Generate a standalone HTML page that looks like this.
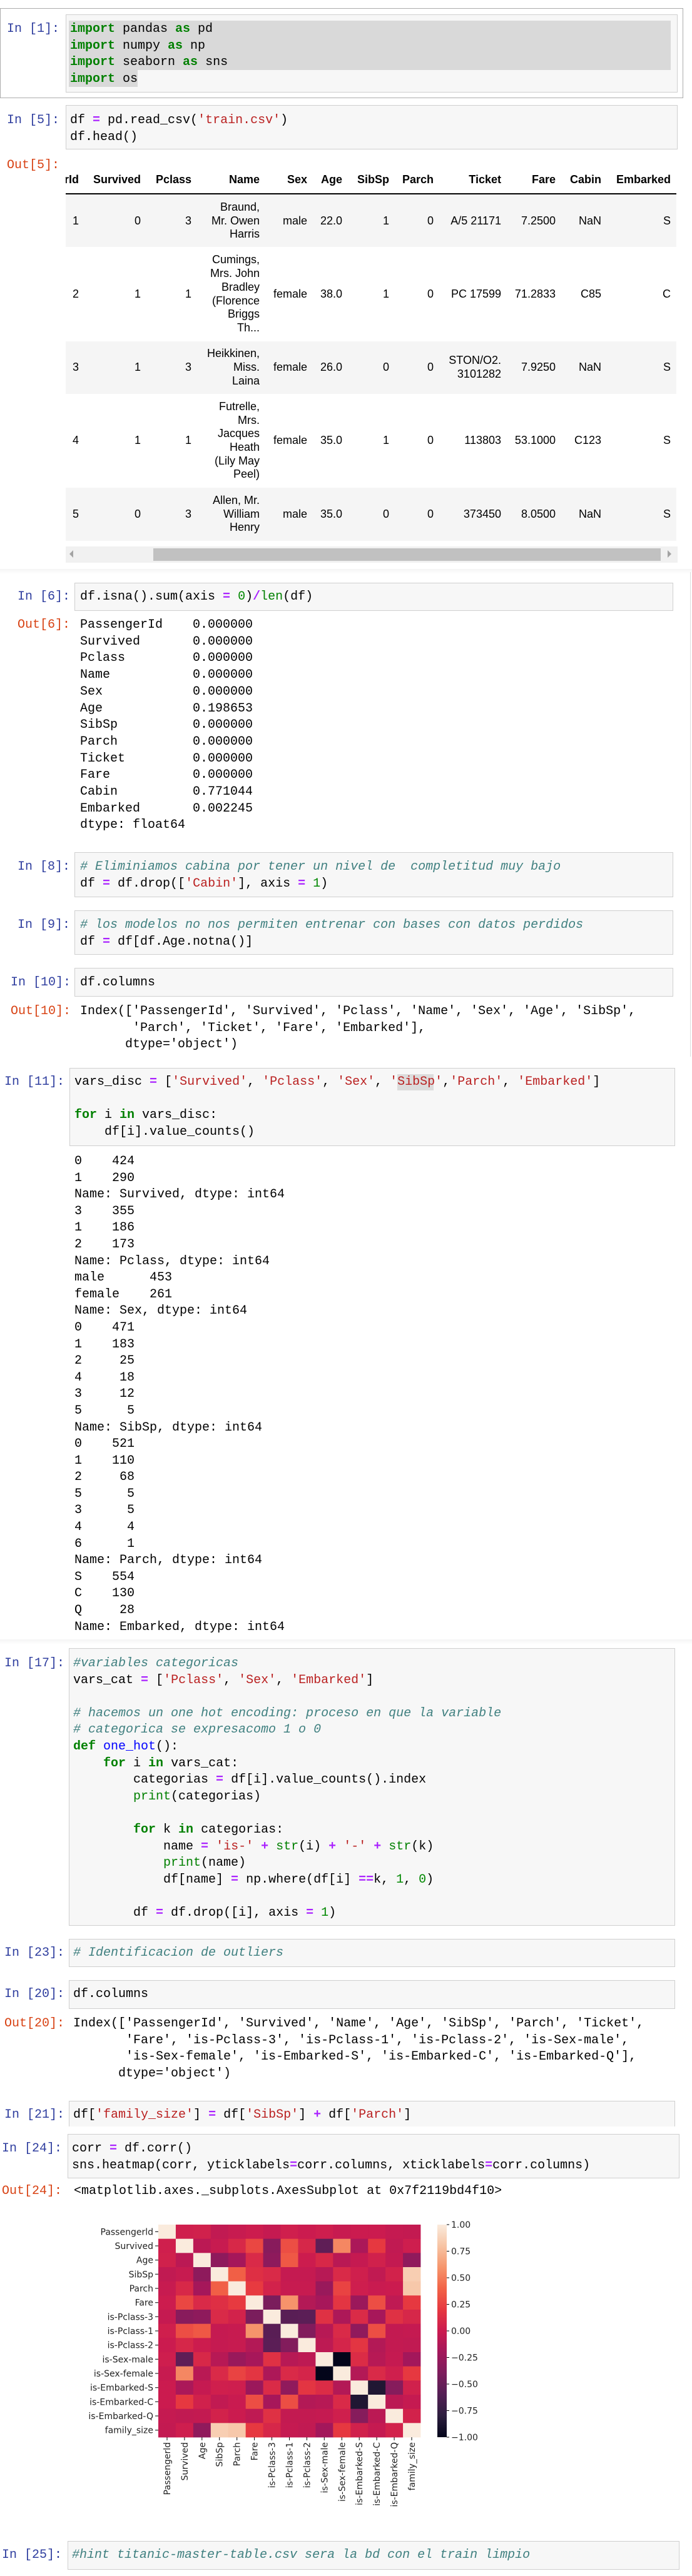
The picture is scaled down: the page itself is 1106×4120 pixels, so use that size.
<!DOCTYPE html>
<html><head><meta charset="utf-8">
<style>
html,body{margin:0;padding:0;background:#fff}
body{width:1106px;height:4120px;position:relative;overflow:hidden}
.p{position:absolute;font:20px/26.6px "Liberation Mono",monospace;white-space:pre;color:#000}
.in{color:#303f9f}.out{color:#d84315}
.box{position:absolute;background:#f7f7f7;border:1px solid #cfcfcf;box-sizing:border-box}
.k{color:#008000;font-weight:bold}.o{color:#aa22ff;font-weight:bold}.s{color:#ba2121}.c{color:#408080;font-style:italic}.n{color:#080}.f{color:#0000ff}.b{color:#008000}
.td{position:absolute;width:160px;display:flex;align-items:center;justify-content:flex-end;text-align:right;font:18px/21.7px "Liberation Sans",sans-serif;color:#000}
.th{font-weight:bold}
.stripe{position:absolute;left:0;width:976px;background:#f5f5f5}
</style></head><body>

<!-- Cell 1 selected -->
<div style="position:absolute;left:0;top:13px;width:1092px;height:144px;border:1.5px solid #ababab;box-sizing:border-box"></div>
<div class="box" style="left:105px;top:23px;width:978px;height:125px"></div>
<div style="position:absolute;left:110px;top:33px;width:962px;height:79px;background:#d9d9d9"></div>
<div style="position:absolute;left:110px;top:112px;width:110px;height:27px;background:#d9d9d9"></div>
<div class="p in" style="left:11px;top:34px">In [1]:</div>
<div class="p" style="left:112px;top:34px"><span class="k">import</span> pandas <span class="k">as</span> pd
<span class="k">import</span> numpy <span class="k">as</span> np
<span class="k">import</span> seaborn <span class="k">as</span> sns
<span class="k">import</span> os</div>

<!-- In 5 -->
<div class="box" style="left:105px;top:168px;width:978px;height:71px"></div>
<div class="p in" style="left:11px;top:180px">In [5]:</div>
<div class="p" style="left:112px;top:180px">df <span class="o">=</span> pd.read_csv(<span class="s">'train.csv'</span>)
df.head()</div>
<div class="p out" style="left:11px;top:252px">Out[5]:</div>

<!-- table -->
<div style="position:absolute;left:105px;top:270px;width:976px;height:600px;overflow:hidden">
<div class="stripe" style="top:42px;height:83px"></div>
<div class="stripe" style="top:276px;height:84px"></div>
<div class="stripe" style="top:510px;height:85px"></div>
<div style="position:absolute;left:0;top:39px;width:976px;height:2px;background:#000"></div>
<!-- header -->
<div class="td th" style="left:-139px;top:6px;height:24px">PassengerId</div>
<div class="td th" style="left:-40px;top:6px;height:24px">Survived</div>
<div class="td th" style="left:41px;top:6px;height:24px">Pclass</div>
<div class="td th" style="left:150px;top:6px;height:24px">Name</div>
<div class="td th" style="left:226px;top:6px;height:24px">Sex</div>
<div class="td th" style="left:282px;top:6px;height:24px">Age</div>
<div class="td th" style="left:357px;top:6px;height:24px">SibSp</div>
<div class="td th" style="left:428px;top:6px;height:24px">Parch</div>
<div class="td th" style="left:536px;top:6px;height:24px">Ticket</div>
<div class="td th" style="left:623px;top:6px;height:24px">Fare</div>
<div class="td th" style="left:696px;top:6px;height:24px">Cabin</div>
<div class="td th" style="left:807px;top:6px;height:24px">Embarked</div>
<!-- r1 -->
<div class="td" style="left:-139px;top:42px;height:83px">1</div>
<div class="td" style="left:-40px;top:42px;height:83px">0</div>
<div class="td" style="left:41px;top:42px;height:83px">3</div>
<div class="td" style="left:150px;top:42px;height:83px">Braund,<br>Mr. Owen<br>Harris</div>
<div class="td" style="left:226px;top:42px;height:83px">male</div>
<div class="td" style="left:282px;top:42px;height:83px">22.0</div>
<div class="td" style="left:357px;top:42px;height:83px">1</div>
<div class="td" style="left:428px;top:42px;height:83px">0</div>
<div class="td" style="left:536px;top:42px;height:83px">A/5 21171</div>
<div class="td" style="left:623px;top:42px;height:83px">7.2500</div>
<div class="td" style="left:696px;top:42px;height:83px">NaN</div>
<div class="td" style="left:807px;top:42px;height:83px">S</div>
<!-- r2 -->
<div class="td" style="left:-139px;top:125px;height:151px">2</div>
<div class="td" style="left:-40px;top:125px;height:151px">1</div>
<div class="td" style="left:41px;top:125px;height:151px">1</div>
<div class="td" style="left:150px;top:125px;height:151px">Cumings,<br>Mrs. John<br>Bradley<br>(Florence<br>Briggs<br>Th...</div>
<div class="td" style="left:226px;top:125px;height:151px">female</div>
<div class="td" style="left:282px;top:125px;height:151px">38.0</div>
<div class="td" style="left:357px;top:125px;height:151px">1</div>
<div class="td" style="left:428px;top:125px;height:151px">0</div>
<div class="td" style="left:536px;top:125px;height:151px">PC 17599</div>
<div class="td" style="left:623px;top:125px;height:151px">71.2833</div>
<div class="td" style="left:696px;top:125px;height:151px">C85</div>
<div class="td" style="left:807px;top:125px;height:151px">C</div>
<!-- r3 -->
<div class="td" style="left:-139px;top:276px;height:84px">3</div>
<div class="td" style="left:-40px;top:276px;height:84px">1</div>
<div class="td" style="left:41px;top:276px;height:84px">3</div>
<div class="td" style="left:150px;top:276px;height:84px">Heikkinen,<br>Miss.<br>Laina</div>
<div class="td" style="left:226px;top:276px;height:84px">female</div>
<div class="td" style="left:282px;top:276px;height:84px">26.0</div>
<div class="td" style="left:357px;top:276px;height:84px">0</div>
<div class="td" style="left:428px;top:276px;height:84px">0</div>
<div class="td" style="left:536px;top:276px;height:84px">STON/O2.<br>3101282</div>
<div class="td" style="left:623px;top:276px;height:84px">7.9250</div>
<div class="td" style="left:696px;top:276px;height:84px">NaN</div>
<div class="td" style="left:807px;top:276px;height:84px">S</div>
<!-- r4 -->
<div class="td" style="left:-139px;top:360px;height:150px">4</div>
<div class="td" style="left:-40px;top:360px;height:150px">1</div>
<div class="td" style="left:41px;top:360px;height:150px">1</div>
<div class="td" style="left:150px;top:360px;height:150px">Futrelle,<br>Mrs.<br>Jacques<br>Heath<br>(Lily May<br>Peel)</div>
<div class="td" style="left:226px;top:360px;height:150px">female</div>
<div class="td" style="left:282px;top:360px;height:150px">35.0</div>
<div class="td" style="left:357px;top:360px;height:150px">1</div>
<div class="td" style="left:428px;top:360px;height:150px">0</div>
<div class="td" style="left:536px;top:360px;height:150px">113803</div>
<div class="td" style="left:623px;top:360px;height:150px">53.1000</div>
<div class="td" style="left:696px;top:360px;height:150px">C123</div>
<div class="td" style="left:807px;top:360px;height:150px">S</div>
<!-- r5 -->
<div class="td" style="left:-139px;top:510px;height:85px">5</div>
<div class="td" style="left:-40px;top:510px;height:85px">0</div>
<div class="td" style="left:41px;top:510px;height:85px">3</div>
<div class="td" style="left:150px;top:510px;height:85px">Allen, Mr.<br>William<br>Henry</div>
<div class="td" style="left:226px;top:510px;height:85px">male</div>
<div class="td" style="left:282px;top:510px;height:85px">35.0</div>
<div class="td" style="left:357px;top:510px;height:85px">0</div>
<div class="td" style="left:428px;top:510px;height:85px">0</div>
<div class="td" style="left:536px;top:510px;height:85px">373450</div>
<div class="td" style="left:623px;top:510px;height:85px">8.0500</div>
<div class="td" style="left:696px;top:510px;height:85px">NaN</div>
<div class="td" style="left:807px;top:510px;height:85px">S</div>
</div>
<!-- scrollbar -->
<div style="position:absolute;left:105px;top:874px;width:978px;height:26px;background:#f1f1f1"></div>
<div style="position:absolute;left:245px;top:877px;width:811px;height:20px;background:#c1c1c1"></div>
<div style="position:absolute;left:111px;top:880px;width:0;height:0;border-top:6px solid transparent;border-bottom:6px solid transparent;border-right:6px solid #a3a3a3"></div>
<div style="position:absolute;left:1067px;top:880px;width:0;height:0;border-top:6px solid transparent;border-bottom:6px solid transparent;border-left:6px solid #a3a3a3"></div>

<div style="position:absolute;left:0;top:910px;width:1106px;height:8px;background:linear-gradient(#f4f4f4,#fff)"></div>
<div style="position:absolute;left:1103px;top:915px;width:1px;height:775px;background:#dcdcdc"></div>

<!-- In 6 -->
<div class="box" style="left:119px;top:932px;width:957px;height:45px"></div>
<div class="p in" style="left:28px;top:942px">In [6]:</div>
<div class="p" style="left:128px;top:942px">df.isna().sum(axis <span class="o">=</span> <span class="n">0</span>)<span class="o">/</span><span class="b">len</span>(df)</div>
<div class="p out" style="left:28px;top:987px">Out[6]:</div>
<div class="p" style="left:128px;top:987px;line-height:26.7px">PassengerId    0.000000
Survived       0.000000
Pclass         0.000000
Name           0.000000
Sex            0.000000
Age            0.198653
SibSp          0.000000
Parch          0.000000
Ticket         0.000000
Fare           0.000000
Cabin          0.771044
Embarked       0.002245
dtype: float64</div>

<!-- In 8 -->
<div class="box" style="left:119px;top:1363px;width:957px;height:72px"></div>
<div class="p in" style="left:28px;top:1374px">In [8]:</div>
<div class="p" style="left:128px;top:1374px"><span class="c"># Eliminiamos cabina por tener un nivel de  completitud muy bajo</span>
df <span class="o">=</span> df.drop([<span class="s">'Cabin'</span>], axis <span class="o">=</span> <span class="n">1</span>)</div>

<!-- In 9 -->
<div class="box" style="left:119px;top:1456px;width:957px;height:71px"></div>
<div class="p in" style="left:28px;top:1467px">In [9]:</div>
<div class="p" style="left:128px;top:1467px"><span class="c"># los modelos no nos permiten entrenar con bases con datos perdidos</span>
df <span class="o">=</span> df[df.Age.notna()]</div>

<!-- In 10 -->
<div class="box" style="left:119px;top:1548px;width:957px;height:46px"></div>
<div class="p in" style="left:17px;top:1559px">In [10]:</div>
<div class="p" style="left:128px;top:1559px">df.columns</div>
<div class="p out" style="left:17px;top:1605px">Out[10]:</div>
<div class="p" style="left:128px;top:1605px">Index(['PassengerId', 'Survived', 'Pclass', 'Name', 'Sex', 'Age', 'SibSp',
       'Parch', 'Ticket', 'Fare', 'Embarked'],
      dtype='object')</div>

<!-- In 11 -->
<div class="box" style="left:111px;top:1708px;width:968px;height:125px"></div>
<div style="position:absolute;left:635px;top:1718px;width:58px;height:26px;background:#dcdcdc"></div>
<div class="p in" style="left:7px;top:1718px">In [11]:</div>
<div class="p" style="left:119px;top:1718px">vars_disc <span class="o">=</span> [<span class="s">'Survived'</span>, <span class="s">'Pclass'</span>, <span class="s">'Sex'</span>, <span class="s">'SibSp'</span>,<span class="s">'Parch'</span>, <span class="s">'Embarked'</span>]

<span class="k">for</span> i <span class="k">in</span> vars_disc:
    df[i].value_counts()</div>
<div class="p" style="left:119px;top:1845px">0    424
1    290
Name: Survived, dtype: int64
3    355
1    186
2    173
Name: Pclass, dtype: int64
male      453
female    261
Name: Sex, dtype: int64
0    471
1    183
2     25
4     18
3     12
5      5
Name: SibSp, dtype: int64
0    521
1    110
2     68
5      5
3      5
4      4
6      1
Name: Parch, dtype: int64
S    554
C    130
Q     28
Name: Embarked, dtype: int64</div>

<div style="position:absolute;left:0;top:2622px;width:1106px;height:8px;background:linear-gradient(#f4f4f4,#fff)"></div>

<!-- In 17 -->
<div class="box" style="left:110px;top:2636px;width:969px;height:444px"></div>
<div class="p in" style="left:7px;top:2648px">In [17]:</div>
<div class="p" style="left:117px;top:2648px"><span class="c">#variables categoricas</span>
vars_cat <span class="o">=</span> [<span class="s">'Pclass'</span>, <span class="s">'Sex'</span>, <span class="s">'Embarked'</span>]

<span class="c"># hacemos un one hot encoding: proceso en que la variable</span>
<span class="c"># categorica se expresacomo 1 o 0</span>
<span class="k">def</span> <span class="f">one_hot</span>():
    <span class="k">for</span> i <span class="k">in</span> vars_cat:
        categorias <span class="o">=</span> df[i].value_counts().index
        <span class="b">print</span>(categorias)

        <span class="k">for</span> k <span class="k">in</span> categorias:
            name <span class="o">=</span> <span class="s">'is-'</span> <span class="o">+</span> <span class="b">str</span>(i) <span class="o">+</span> <span class="s">'-'</span> <span class="o">+</span> <span class="b">str</span>(k)
            <span class="b">print</span>(name)
            df[name] <span class="o">=</span> np.where(df[i] <span class="o">==</span>k, <span class="n">1</span>, <span class="n">0</span>)

        df <span class="o">=</span> df.drop([i], axis <span class="o">=</span> <span class="n">1</span>)</div>

<!-- In 23 -->
<div class="box" style="left:110px;top:3101px;width:969px;height:45px"></div>
<div class="p in" style="left:7px;top:3111px">In [23]:</div>
<div class="p" style="left:117px;top:3111px"><span class="c"># Identificacion de outliers</span></div>

<!-- In 20 -->
<div class="box" style="left:110px;top:3167px;width:969px;height:46px"></div>
<div class="p in" style="left:7px;top:3177px">In [20]:</div>
<div class="p" style="left:117px;top:3177px">df.columns</div>
<div class="p out" style="left:7px;top:3224px">Out[20]:</div>
<div class="p" style="left:117px;top:3224px">Index(['PassengerId', 'Survived', 'Name', 'Age', 'SibSp', 'Parch', 'Ticket',
       'Fare', 'is-Pclass-3', 'is-Pclass-1', 'is-Pclass-2', 'is-Sex-male',
       'is-Sex-female', 'is-Embarked-S', 'is-Embarked-C', 'is-Embarked-Q'],
      dtype='object')</div>

<!-- In 21 -->
<div class="box" style="left:110px;top:3360px;width:969px;height:41px;border-bottom:none"></div>
<div class="p in" style="left:7px;top:3370px">In [21]:</div>
<div class="p" style="left:117px;top:3370px">df[<span class="s">'family_size'</span>] <span class="o">=</span> df[<span class="s">'SibSp'</span>] <span class="o">+</span> df[<span class="s">'Parch'</span>]</div>

<!-- In 24 -->
<div class="box" style="left:108px;top:3413px;width:978px;height:71px"></div>
<div class="p in" style="left:3px;top:3424px">In [24]:</div>
<div class="p" style="left:115px;top:3424px">corr <span class="o">=</span> df.corr()
sns.heatmap(corr, yticklabels<span class="o">=</span>corr.columns, xticklabels<span class="o">=</span>corr.columns)</div>
<div class="p out" style="left:3px;top:3492px">Out[24]:</div>
<div class="p" style="left:118px;top:3492px">&lt;matplotlib.axes._subplots.AxesSubplot at 0x7f2119bd4f10&gt;</div>

<!-- heatmap -->
<svg style="position:absolute;left:0;top:3540px" width="800" height="520" viewBox="0 3540 800 520" font-family="DejaVu Sans, sans-serif" font-size="14">
<defs><linearGradient id="cb" x1="0" y1="0" x2="0" y2="1">
<stop offset="0" stop-color="#faebdd"/><stop offset="0.1" stop-color="#f7c4a4"/><stop offset="0.2" stop-color="#f6966d"/><stop offset="0.3" stop-color="#f26347"/><stop offset="0.4" stop-color="#e63840"/><stop offset="0.5" stop-color="#cb1b4f"/><stop offset="0.6" stop-color="#a3175b"/><stop offset="0.7" stop-color="#7c1d5c"/><stop offset="0.8" stop-color="#531e54"/><stop offset="0.9" stop-color="#2c1e3e"/><stop offset="1" stop-color="#03051a"/></linearGradient></defs>
<rect x="253" y="3558" width="419" height="340" fill="#c8174e"/>
<g id="hm"></g>
<rect x="699" y="3558" width="15" height="340" fill="url(#cb)"/>
<g stroke="#000" stroke-width="1">
<path d="M714 3558h4M714 3600.5h4M714 3643h4M714 3685.5h4M714 3728h4M714 3770.5h4M714 3813h4M714 3855.5h4M714 3898h4"/>
<path d="M248 3569.3h5M248 3592h5M248 3614.7h5M248 3637.3h5M248 3660h5M248 3682.7h5M248 3705.3h5M248 3728h5M248 3750.7h5M248 3773.3h5M248 3796h5M248 3818.7h5M248 3841.3h5M248 3864h5M248 3886.7h5"/>
<path d="M267 3898v5M294.9 3898v5M322.8 3898v5M350.7 3898v5M378.7 3898v5M406.6 3898v5M434.5 3898v5M462.5 3898v5M490.4 3898v5M518.3 3898v5M546.3 3898v5M574.2 3898v5M602.1 3898v5M630.1 3898v5M658 3898v5"/>
</g>
<g fill="#222">
<text x="721" y="3563">1.00</text><text x="721" y="3605.5">0.75</text><text x="721" y="3648">0.50</text><text x="721" y="3690.5">0.25</text><text x="721" y="3733">0.00</text><text x="721" y="3775.5">−0.25</text><text x="721" y="3818">−0.50</text><text x="721" y="3860.5">−0.75</text><text x="721" y="3903">−1.00</text>
</g>
<g fill="#222" text-anchor="end">
<text x="245" y="3574.3">Passengerld</text><text x="245" y="3597">Survived</text><text x="245" y="3619.7">Age</text><text x="245" y="3642.3">SibSp</text><text x="245" y="3665">Parch</text><text x="245" y="3687.7">Fare</text><text x="245" y="3710.3">is-Pclass-3</text><text x="245" y="3733">is-Pclass-1</text><text x="245" y="3755.7">is-Pclass-2</text><text x="245" y="3778.3">is-Sex-male</text><text x="245" y="3801">is-Sex-female</text><text x="245" y="3823.7">is-Embarked-S</text><text x="245" y="3846.3">is-Embarked-C</text><text x="245" y="3869">is-Embarked-Q</text><text x="245" y="3891.7">family_size</text>
<text transform="translate(272,3906) rotate(-90)">Passengerld</text>
<text transform="translate(299.9,3906) rotate(-90)">Survived</text>
<text transform="translate(327.8,3906) rotate(-90)">Age</text>
<text transform="translate(355.7,3906) rotate(-90)">SibSp</text>
<text transform="translate(383.7,3906) rotate(-90)">Parch</text>
<text transform="translate(411.6,3906) rotate(-90)">Fare</text>
<text transform="translate(439.5,3906) rotate(-90)">is-Pclass-3</text>
<text transform="translate(467.5,3906) rotate(-90)">is-Pclass-1</text>
<text transform="translate(495.4,3906) rotate(-90)">is-Pclass-2</text>
<text transform="translate(523.3,3906) rotate(-90)">is-Sex-male</text>
<text transform="translate(551.3,3906) rotate(-90)">is-Sex-female</text>
<text transform="translate(579.2,3906) rotate(-90)">is-Embarked-S</text>
<text transform="translate(607.1,3906) rotate(-90)">is-Embarked-C</text>
<text transform="translate(635.1,3906) rotate(-90)">is-Embarked-Q</text>
<text transform="translate(663,3906) rotate(-90)">family_size</text>
</g>
</svg>

<!-- In 25 -->
<div class="box" style="left:108px;top:4064px;width:978px;height:46px"></div>
<div class="p in" style="left:3px;top:4074px">In [25]:</div>
<div class="p" style="left:115px;top:4074px"><span class="c">#hint titanic-master-table.csv sera la bd con el train limpio</span></div>

<script>
(function(){
var U=[
[0.03,0.04,-0.05,-0.02,0.01,-0.03,0.03,0.0,0.02,-0.02,0.0,0.0,-0.03,-0.04],
[-0.08,-0.02,0.09,0.27,-0.34,0.30,0.08,-0.54,0.54,-0.16,0.20,-0.05,0.02],
[-0.31,-0.19,0.10,-0.31,0.35,0.01,0.09,-0.09,-0.03,0.04,-0.04,-0.30],
[0.38,0.14,0.10,-0.03,-0.03,-0.10,0.10,0.03,-0.05,0.05,0.85],
[0.21,0.05,-0.02,-0.02,-0.25,0.25,0.02,-0.01,0.0,0.82],
[-0.41,0.59,-0.12,-0.18,0.18,-0.24,0.30,-0.06,0.20],
[-0.57,-0.56,0.15,-0.15,0.11,-0.18,0.15,0.08],
[-0.37,-0.10,0.10,-0.30,0.30,-0.04,-0.03],
[-0.07,0.07,0.18,-0.12,-0.04,-0.05],
[-1,0.12,-0.10,-0.03,-0.20],
[-0.12,0.10,0.03,0.20],
[-0.86,-0.35,0.04],
[-0.08,-0.03],
[0.05]];
var n=15,M=[];for(var i=0;i<n;i++){M.push([]);for(var j=0;j<n;j++)M[i].push(1);}
for(var i=0;i<n-1;i++)for(var k=0;k<U[i].length;k++){var j=i+1+k;M[i][j]=U[i][k];M[j][i]=U[i][k];}
var S=[[3,5,26],[44,30,62],[83,30,84],[124,29,92],[163,23,91],[203,27,79],[230,56,64],[242,99,71],[246,150,109],[247,196,164],[250,235,221]];
function col(v){var t=(v+1)/2*10;if(t<0)t=0;if(t>10)t=10;var a=Math.floor(t);if(a>=10)a=9;var f=t-a;var c=[0,1,2].map(function(q){return Math.round(S[a][q]+(S[a+1][q]-S[a][q])*f);});return 'rgb('+c.join(',')+')';}
var g=document.getElementById('hm'),w=419/15,h=340/15,s='';
for(var i=0;i<n;i++)for(var j=0;j<n;j++){s+='<rect x="'+(253+j*w).toFixed(2)+'" y="'+(3558+i*h).toFixed(2)+'" width="'+(w+0.4).toFixed(2)+'" height="'+(h+0.4).toFixed(2)+'" fill="'+col(M[i][j])+'"/>';}
g.innerHTML=s;
})();
</script>
</body></html>
